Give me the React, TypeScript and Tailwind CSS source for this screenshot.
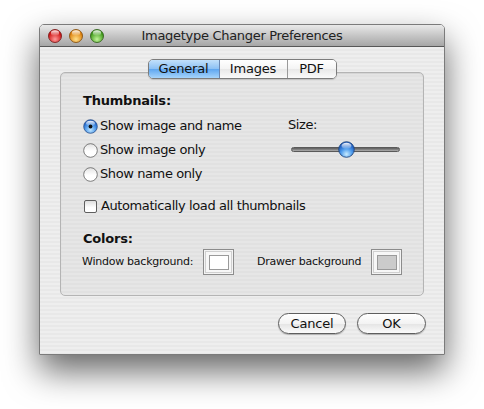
import React from "react";

const font = { fontFamily: '"DejaVu Sans", "Lucida Grande", sans-serif' };

function Light({ c1, c2, c3 }: { c1: string; c2: string; c3: string }) {
  return (
    <svg width="14" height="14" viewBox="0 0 14 14">
      <defs>
        <radialGradient id={"g" + c1} cx="50%" cy="75%" r="60%">
          <stop offset="0%" stopColor={c1} />
          <stop offset="100%" stopColor={c2} />
        </radialGradient>
        <linearGradient id={"h" + c1} x1="0" y1="0" x2="0" y2="1">
          <stop offset="0%" stopColor="#ffffff" stopOpacity="0.95" />
          <stop offset="100%" stopColor="#ffffff" stopOpacity="0.05" />
        </linearGradient>
      </defs>
      <circle cx="7" cy="7" r="6.5" fill={"url(#g" + c1 + ")"} stroke={c3} strokeWidth="0.9" />
      <ellipse cx="7" cy="4" rx="4.2" ry="2.7" fill={"url(#h" + c1 + ")"} />
    </svg>
  );
}

function Radio({ on }: { on?: boolean }) {
  return (
    <svg width="15" height="15" viewBox="0 0 15 15">
      <defs>
        <radialGradient id="rb" cx="50%" cy="75%" r="65%">
          <stop offset="0%" stopColor="#bfe6ff" />
          <stop offset="60%" stopColor="#4d98ea" />
          <stop offset="100%" stopColor="#1f5fc4" />
        </radialGradient>
        <linearGradient id="rw" x1="0" y1="0" x2="0" y2="1">
          <stop offset="0%" stopColor="#e2e2e2" />
          <stop offset="55%" stopColor="#ffffff" />
          <stop offset="100%" stopColor="#ffffff" />
        </linearGradient>
        <linearGradient id="rh" x1="0" y1="0" x2="0" y2="1">
          <stop offset="0%" stopColor="#ffffff" stopOpacity="0.95" />
          <stop offset="100%" stopColor="#ffffff" stopOpacity="0.1" />
        </linearGradient>
      </defs>
      {on ? (
        <>
          <circle cx="7.5" cy="7.5" r="6.8" fill="url(#rb)" stroke="#2a4f8a" strokeWidth="0.8" />
          <ellipse cx="7.5" cy="4.3" rx="4.4" ry="2.6" fill="url(#rh)" />
          <circle cx="7.5" cy="7.5" r="1.9" fill="#111" />
        </>
      ) : (
        <circle cx="7.5" cy="7.5" r="6.8" fill="url(#rw)" stroke="#5f5f5f" strokeWidth="0.8" />
      )}
    </svg>
  );
}

function ColorWell({ color }: { color: string }) {
  return (
    <div className="w-[31px] h-[26px] border border-[#8c8c8c] bg-[#f4f4f4] flex items-center justify-center">
      <div className="w-[27px] h-[22px] border border-[#d0d0d0] bg-[#f7f7f7] flex items-center justify-center">
        <div className="w-[20px] h-[15px] border border-[#9a9a9a]" style={{ backgroundColor: color }} />
      </div>
    </div>
  );
}

export default function App() {
  return (
    <div className="w-[484px] h-[409px] bg-white pt-[24px] pl-[39px] overflow-hidden" style={font}>
      <div className="w-[406px] h-[331px] border border-[#7b7b7b] shadow-[0_16px_34px_rgba(0,0,0,0.6)] flex flex-col rounded-t-[5px] overflow-hidden">
        {/* Title bar */}
        <div className="relative h-[22px] shrink-0 bg-[linear-gradient(#e9e9e9,#c6c6c6_50%,#a6a6a6)] border-b border-[#575757] flex items-center">
          <div className="flex items-center gap-[7px] pl-[8px] pt-[1px]">
            <Light c1="#ff9a9a" c2="#cc0a0a" c3="#7a1f1f" />
            <Light c1="#ffe08a" c2="#dc7c05" c3="#865214" />
            <Light c1="#c2f59a" c2="#389512" c3="#356420" />
          </div>
          <div className="absolute inset-0 flex items-center justify-center text-[13px] text-[#222] tracking-[-0.3px] pt-[1px]">
            Imagetype Changer Preferences
          </div>
        </div>
        {/* Content */}
        <div className="flex-1 bg-[repeating-linear-gradient(#eeeeee_0px,#eeeeee_2px,#e8e8e8_2px,#e8e8e8_4px)] px-[20px] pt-[12px] flex flex-col">
          {/* Tabs */}
          <div className="relative z-10 flex justify-center h-[20px]">
            <div className="flex h-[20px] border border-[#7c7c7c] rounded-[5px] overflow-hidden text-[13px] text-[#111] tracking-[-0.2px] shadow-[0_1px_1px_rgba(0,0,0,0.15)]">
              <div className="w-[71px] flex items-center justify-center bg-[linear-gradient(#c2e0fb,#8bc0f4_50%,#5ea6f0_51%,#a6d4fb)] border-r border-[#6a86b0]">
                General
              </div>
              <div className="w-[68px] flex items-center justify-center bg-[linear-gradient(#ffffff,#f4f4f4_50%,#e8e8e8_51%,#fafafa)] border-r border-[#9a9a9a]">
                Images
              </div>
              <div className="w-[48px] flex items-center justify-center bg-[linear-gradient(#ffffff,#f4f4f4_50%,#e8e8e8_51%,#fafafa)]">
                PDF
              </div>
            </div>
          </div>
          {/* Group box */}
          <div className="-mt-[7px] h-[224px] border border-[#b4b4b4] rounded-[5px] bg-[repeating-linear-gradient(#e6e6e6_0px,#e6e6e6_2px,#e1e1e1_2px,#e1e1e1_4px)] shadow-[inset_0_1px_1px_rgba(0,0,0,0.08)] pl-[22px] pr-[20px] pt-[19px] text-[13px] text-[#111] tracking-[-0.4px]">
            <div className="h-[18px] flex items-center font-bold tracking-[-0.2px]">Thumbnails:</div>
            <div className="mt-[4px] flex">
              <div className="w-[205px] flex flex-col">
                <div className="h-[24px] flex items-center gap-[2px]">
                  <Radio on />
                  <span>Show image and name</span>
                </div>
                <div className="h-[24px] flex items-center gap-[2px]">
                  <Radio />
                  <span>Show image only</span>
                </div>
                <div className="h-[24px] flex items-center gap-[2px]">
                  <Radio />
                  <span>Show name only</span>
                </div>
              </div>
              <div className="flex flex-col">
                <div className="h-[24px] flex items-center -mt-[1px]">Size:</div>
                <div className="h-[24px] flex items-center pl-[3px]">
                  <div className="relative w-[109px] h-[5px] rounded-full bg-[linear-gradient(#5c5c5c,#8a8a8a_60%,#b0b0b0)] border border-[#5a5a5a]">
                    <div className="absolute left-[46px] -top-[7px] w-[17px] h-[17px]">
                      <svg width="17" height="17" viewBox="0 0 17 17">
                        <defs>
                          <radialGradient id="kb" cx="50%" cy="80%" r="65%">
                            <stop offset="0%" stopColor="#c8ecff" />
                            <stop offset="55%" stopColor="#4f9cec" />
                            <stop offset="100%" stopColor="#1c5bc0" />
                          </radialGradient>
                          <linearGradient id="kh" x1="0" y1="0" x2="0" y2="1">
                            <stop offset="0%" stopColor="#ffffff" stopOpacity="0.95" />
                            <stop offset="100%" stopColor="#ffffff" stopOpacity="0.1" />
                          </linearGradient>
                        </defs>
                        <circle cx="8.5" cy="8.5" r="7.8" fill="url(#kb)" stroke="#23487e" strokeWidth="0.9" />
                        <ellipse cx="8.5" cy="4.8" rx="5" ry="3" fill="url(#kh)" />
                      </svg>
                    </div>
                  </div>
                </div>
              </div>
            </div>
            <div className="mt-[8px] h-[24px] flex items-center gap-[4px]">
              <div className="ml-[1px] w-[13px] h-[13px] rounded-[2px] border border-[#5f5f5f] bg-[linear-gradient(#dedede,#ffffff_60%)]" />
              <span>Automatically load all thumbnails</span>
            </div>
            <div className="mt-[12px] h-[18px] flex items-center font-bold tracking-[-0.2px]">Colors:</div>
            <div className="mt-[1px] h-[26px] flex items-center text-[11px] tracking-[-0.25px] -ml-[1px]">
              <span className="w-[121px]">Window background:</span>
              <ColorWell color="#ffffff" />
              <span className="ml-[23px] w-[114px]">Drawer background</span>
              <ColorWell color="#cbcbcb" />
            </div>
          </div>
          {/* Buttons */}
          <div className="mt-[17px] flex justify-end gap-[11px] -mr-[2px]">
            <button className="w-[68px] h-[21px] rounded-full border border-[#5e5e5e] bg-[linear-gradient(#ffffff,#f3f3f3_50%,#e4e4e4_51%,#fbfbfb)] text-[13px] text-[#111] tracking-[-0.2px] shadow-[0_1px_1px_rgba(0,0,0,0.25)] flex items-center justify-center">
              Cancel
            </button>
            <button className="w-[69px] h-[21px] rounded-full border border-[#5e5e5e] bg-[linear-gradient(#ffffff,#f3f3f3_50%,#e4e4e4_51%,#fbfbfb)] text-[13px] text-[#111] tracking-[-0.2px] shadow-[0_1px_1px_rgba(0,0,0,0.25)] flex items-center justify-center">
              OK
            </button>
          </div>
        </div>
      </div>
    </div>
  );
}
